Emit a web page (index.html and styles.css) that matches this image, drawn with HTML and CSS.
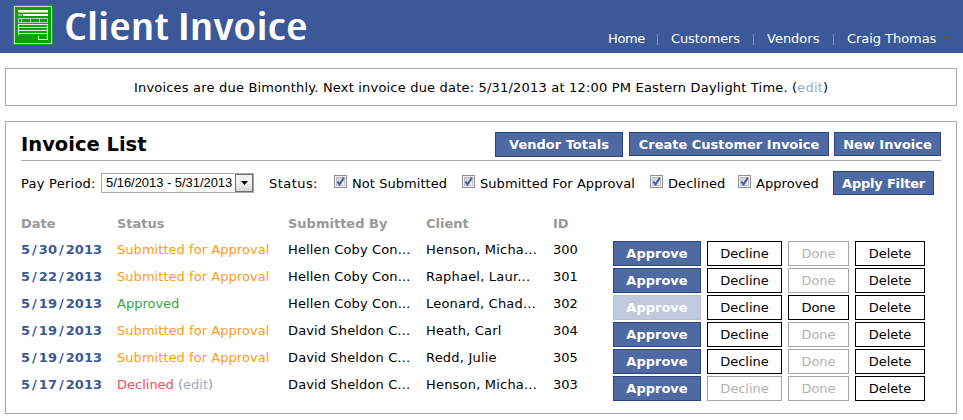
FILE: index.html
```
<!DOCTYPE html>
<html lang="en">
<head>
<meta charset="utf-8">
<title>Client Invoice</title>
<link rel="stylesheet" href="styles.css">
</head>
<body>
<header class="topbar">
  <svg class="logo" width="40" height="40" viewBox="0 0 40 40">
    <rect width="40" height="40" fill="#10a526"/>
    <rect x="1.500" y="1.500" width="37" height="37" fill="#04a404" stroke="#b4e8b4"/>
    <path d="M5 5h30v2.500H5z" fill="#fff"/>
    <path d="M5 9h4v2H5z" fill="#7fd47f"/>
    <path d="M10 9h25v2H10z" fill="#fff"/>
    <path d="M5.500 13.500h29v4h-29zM8.500 14v4M17.500 14v4M26.500 14v4" fill="none" stroke="#a5e3a5"/>
    <path d="M5 19.500h30M5 22.500h30M5 25.500h30M5 28.500h30M5.500 19v11M34.500 19v15M25.500 31v3.500H35" fill="none" stroke="#dcf5dc" stroke-width="1.200"/>
  </svg>
  <h1 class="brand">Client Invoice</h1>
  <nav class="nav">
    <a class="nav-home">Home</a><i class="sep"></i>
    <a class="nav-customers">Customers</a><i class="sep"></i>
    <a class="nav-vendors">Vendors</a><i class="sep"></i>
    <a class="nav-user">Craig Thomas</a><i class="caret"></i>
  </nav>
</header>

<section class="notice"><span>Invoices are due Bimonthly. Next invoice due date: 5/31/2013 at 12:00 PM Eastern Daylight Time. (<a class="edit">edit</a>)</span></section>

<main class="panel">
  <div class="panel-head">
    <h2>Invoice List</h2>
    <button class="btn primary totals">Vendor Totals</button>
    <button class="btn primary create">Create Customer Invoice</button>
    <button class="btn primary new">New Invoice</button>
  </div>

  <div class="filters">
    <span class="period-label">Pay Period:</span>
    <div class="select"><span>5/16/2013 - 5/31/2013</span><b class="drop"><svg width="7" height="4"><path d="M0 0h7L3.500 4z"/></svg></b></div>
    <span class="status-label">Status:</span>
    <label class="check c1"><svg class="box" width="13" height="13"><use href="#tick"/></svg><span>Not Submitted</span></label>
    <label class="check c2"><svg class="box" width="13" height="13"><use href="#tick"/></svg><span>Submitted For Approval</span></label>
    <label class="check c3"><svg class="box" width="13" height="13"><use href="#tick"/></svg><span>Declined</span></label>
    <label class="check c4"><svg class="box" width="13" height="13"><use href="#tick"/></svg><span>Approved</span></label>
    <button class="btn primary apply">Apply Filter</button>
  </div>

  <div class="row head"><span>Date</span><span>Status</span><span>Submitted By</span><span>Client</span><span>ID</span></div>

  <div class="row"><b class="date">5<i>/</i>30<i>/</i>2013</b><span class="pending">Submitted for Approval</span><span class="by">Hellen Coby Con...</span><span class="client">Henson, Micha...</span><span>300</span>
    <div class="actions"><button class="btn primary">Approve</button><button class="btn">Decline</button><button class="btn" disabled>Done</button><button class="btn">Delete</button></div></div>
  <div class="row"><b class="date">5<i>/</i>22<i>/</i>2013</b><span class="pending">Submitted for Approval</span><span class="by">Hellen Coby Con...</span><span class="client">Raphael, Laur...</span><span>301</span>
    <div class="actions"><button class="btn primary">Approve</button><button class="btn">Decline</button><button class="btn" disabled>Done</button><button class="btn">Delete</button></div></div>
  <div class="row"><b class="date">5<i>/</i>19<i>/</i>2013</b><span class="approved">Approved</span><span class="by">Hellen Coby Con...</span><span class="client">Leonard, Chad...</span><span>302</span>
    <div class="actions"><button class="btn primary" disabled>Approve</button><button class="btn">Decline</button><button class="btn">Done</button><button class="btn">Delete</button></div></div>
  <div class="row"><b class="date">5<i>/</i>19<i>/</i>2013</b><span class="pending">Submitted for Approval</span><span class="by">David Sheldon C...</span><span class="client">Heath, Carl</span><span>304</span>
    <div class="actions"><button class="btn primary">Approve</button><button class="btn">Decline</button><button class="btn" disabled>Done</button><button class="btn">Delete</button></div></div>
  <div class="row"><b class="date">5<i>/</i>19<i>/</i>2013</b><span class="pending">Submitted for Approval</span><span class="by">David Sheldon C...</span><span class="client">Redd, Julie</span><span>305</span>
    <div class="actions"><button class="btn primary">Approve</button><button class="btn">Decline</button><button class="btn" disabled>Done</button><button class="btn">Delete</button></div></div>
  <div class="row"><b class="date">5<i>/</i>17<i>/</i>2013</b><span class="declined">Declined <em>(<a class="edit">edit</a>)</em></span><span class="by">David Sheldon C...</span><span class="client">Henson, Micha...</span><span>303</span>
    <div class="actions"><button class="btn primary">Approve</button><button class="btn" disabled>Decline</button><button class="btn" disabled>Done</button><button class="btn">Delete</button></div></div>
</main>

<svg class="defs" width="0" height="0">
  <defs>
    <linearGradient id="face" x1="0" y1="0" x2="1" y2="1"><stop offset="0" stop-color="#c3c9d0"/><stop offset="1" stop-color="#f6f6f6"/></linearGradient>
    <g id="tick">
      <rect x=".5" y=".5" width="12" height="12" fill="#f4f4f4" stroke="#8e8f8f"/>
      <rect x="2.500" y="2.500" width="8" height="8" fill="url(#face)" stroke="#bcc0c6"/>
      <path d="M3.500 6.500L5.500 9.500L9.800 2.800" fill="none" stroke="#41579b" stroke-width="1.900"/>
    </g>
  </defs>
</svg>
</body>
</html>
```
FILE: styles.css
```
* { box-sizing: border-box; }
body {
  margin: 0;
  background: #fff;
  color: #000;
  font: 13px/16px Verdana, "DejaVu Sans", sans-serif;
  white-space: nowrap;
}
h1, h2 { margin: 0; }
em, i { font-style: normal; }

.topbar { display: flex; height: 53px; background: #3b5998; color: #fff; }
.logo { margin: 5px 0 0 13px; flex: none; }
.brand {
  margin-left: 11px;
  width: 190px;
  font: 600 38px/51px "Open Sans", sans-serif;
  font-stretch: 75%;
  transform: scaleX(1.305);
  transform-origin: 0 0;
}
.nav { display: flex; margin: 31px 13px 0 auto; }
.nav a { flex: none; }
.nav-home { width: 36px; letter-spacing: -0.400px; }
.nav-customers { width: 69px; letter-spacing: -0.100px; }
.nav-vendors { width: 53px; }
.nav-user { width: 89px; letter-spacing: -0.050px; }
.sep { width: 1px; height: 11px; margin: 3px 13px 0 13px; background: #8d88ad; }
.caret { margin: 5px 0 0 6px; border: 4px solid transparent; border-top-color: #555; border-bottom: 0; height: 4px; }

.notice {
  margin: 15px 6px 0 5px;
  height: 38px;
  padding: 11px 0 0 128px;
  border: 1px solid #aaa;
  letter-spacing: 0.190px;
}
.edit { color: #9da9c9; }

.panel { margin: 15px 6px 0 5px; height: 293px; padding: 10px 15px 0; border: 1px solid #aaa; }
.panel-head { display: flex; height: 29px; border-bottom: 1px solid #aaa; }
.panel-head h2 { margin-right: auto; font-size: 19.500px; line-height: 26px; }

.btn {
  height: 25px;
  padding: 1px 0 0;
  border: 1px solid #000;
  background: #fff;
  color: #000;
  font: inherit;
  text-align: center;
}
.btn:disabled { border-color: #a6a6a6; color: #b2b2b2; }
.primary { height: 24px; border-color: #29447e; background: #4f6aa3; color: #fff; font-weight: bold; }
.primary:disabled { border-color: #b4bfd8; background: #c0cadf; color: #fff; }
.totals { width: 128px; height: 25px; margin-right: 6px; }
.create { width: 200px; margin-right: 5px; }
.new { width: 107px; }

.filters { display: flex; margin-top: 10px; height: 24px; }
.filters > span, .check span { padding-top: 5px; }
.period-label { width: 80px; letter-spacing: 0.250px; }
.select {
  display: flex;
  width: 153px;
  height: 20px;
  margin-top: 2px;
  border: 1px solid #aaa;
  font: 13px/18px "Liberation Sans", sans-serif;
}
.select span { width: 134px; padding-left: 4px; letter-spacing: -0.050px; }
.drop {
  width: 18px;
  height: 18px;
  border: 1px solid #707070;
  background: linear-gradient(#f2f2f2 50%, #d6d6d6);
  display: flex;
  align-items: center;
  justify-content: center;
}
.status-label { width: 65px; margin-left: 15px; letter-spacing: 0.450px; }
.check { display: flex; letter-spacing: 0.060px; }
.check .box { margin: 4px 5px 0 0; flex: none; }
.c1 { width: 128px; }
.c2 { width: 188px; }
.c3 { width: 88px; }
.c4 { width: 95px; }
.apply { width: 101px; letter-spacing: -0.200px; }

.row {
  display: grid;
  grid-template-columns: 96px 171px 138px 127px 60px 312px;
  height: 27px;
  align-items: start;
}
.row > span, .row > b { padding-top: 2px; }
.head { margin-top: 19px; height: 26px; color: #999; font-weight: bold; }
.date { color: #3b5998; letter-spacing: 0.050px; }
.date i { padding: 0 1.950px; }
.pending { color: #ff9a1a; letter-spacing: 0.050px; }
.by { letter-spacing: 0.130px; }
.client { letter-spacing: 0.200px; }
.approved { color: #3aa63a; }
.declined { color: #ff4a5a; }
.declined em { color: #999; }
.actions { display: grid; grid-template-columns: 88px 75px 61px 70px; column-gap: 6px; padding-top: 1px; }
.actions .btn { height: 25px; }
.defs { position: absolute; }
```
